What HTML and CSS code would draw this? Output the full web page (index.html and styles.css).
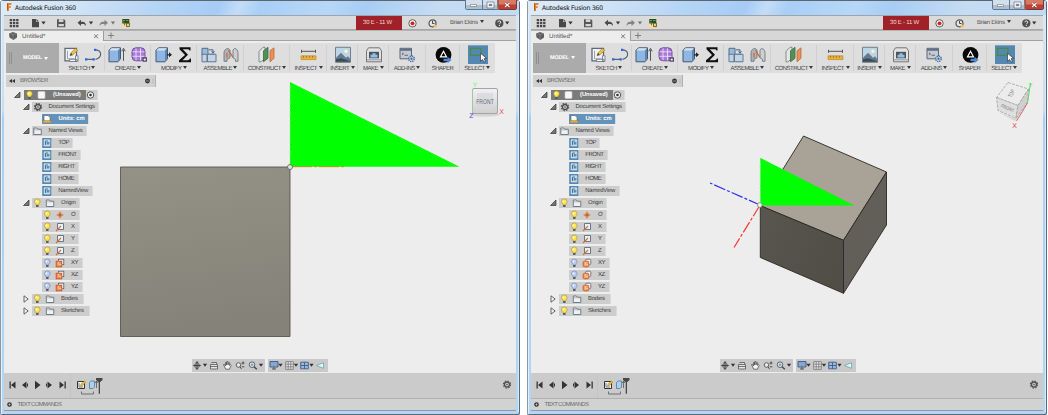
FILE: index.html
```html
<!DOCTYPE html>
<html lang="en">
<head>
<meta charset="utf-8">
<title>Autodesk Fusion 360</title>
<link rel="stylesheet" href="styles.css">
</head>
<body>
<main class="desktop" id="desktop"></main>
<script src="app.js"></script>
</body>
</html>
```

FILE: styles.css
```css
* { box-sizing: border-box; }
body { margin: 0; background: #fff; overflow: hidden; font-family: "Liberation Sans", Arial, sans-serif; text-rendering: geometricPrecision; }
svg { display: block; flex: none; }
.desktop { display: flex; gap: 7px; width: 1048px; height: 415px; }

.window { width: 520px; height: 415px; flex: none; display: flex; flex-direction: column; padding: 0 4px 4px; border-radius: 4px 4px 2px 2px; overflow: hidden; border: 0 solid #5e7386; box-shadow: inset 1px 0 #8697a6, inset -1px -1px #596977, inset 0 1px #5c6670, inset 2px 0 #e4f1fc, inset -2px 0 #d8ebfb; background: linear-gradient(180deg, #d9e7f5 0, #c9ddf1 110px, #a8cff5 118px, #b4d6f6 100%); }
.window .frame { display: flex; flex-direction: column; flex: 1; min-height: 0; border-left: 0; }
.titlebar { height: 14px; margin: 1px -3px 0; padding-left: 3px; flex: none; display: flex; background: linear-gradient(112deg, #dfebf7 0, #cfe2f6 16%, #b5d5f5 30%, #a6ccf5 42%, #c4ddf7 46%, #a9cff6 50%, #b7d7f7 63%, #a7cdf3 70%, #c5dcf3 84%, #c2dbf3 100%); }
.brand { display: flex; align-items: center; height: 12px; gap: 2px; font: 6.4px "Open Sans", "Liberation Sans", sans-serif; color: #222; letter-spacing: -.06px; flex: 1; -webkit-text-stroke: .1px #222; }
.controls { display: flex; margin-right: 2px; margin-top: -1px; }

.quickbar { height: 15px; flex: none; display: flex; background: #dadada; border-top: 1px solid #9aa5ae; border-bottom: 1px solid #a6a6a6; }
.spacer { flex: 1; }
.clock-slot { width: 46px; margin: 0 0 -1px; background: #a02128; color: #f3d9da; font-size: 6px; line-height: 14px; text-align: center; padding-right: 3px; letter-spacing: -.22px; }
.user { width: 48px; padding-left: 8px; font-size: 6px; line-height: 14px; color: #505050; letter-spacing: -.24px; white-space: nowrap; }
.caret { display: inline-block; border: 2px solid transparent; border-top: 3px solid #3a3a3a; border-bottom: 0; margin-left: 1.5px; vertical-align: 1px; }
.user .caret { margin-left: 2.5px; }

.tabs { height: 11px; flex: none; display: flex; background: #d7d7d7; border-bottom: 1px solid #a3a3a3; border-top: 1px solid #b4b4b4; }
.tab { width: 100px; display: flex; align-items: center; background: #ededed; border-right: 1px solid #9d9d9d; font-size: 6.2px; color: #555; height: 10px; }
.tab span { flex: 1; padding-top: 1px; }

.workspace { flex: 1; min-height: 0; position: relative; background: #ededed; padding: 2px 0 0 2px; }
.second .workspace { padding-top: 1.5px; }
.scene { position: absolute; left: 0; top: 0; z-index: 0; pointer-events: none; }
.toolbar { display: flex; width: 489px; height: 30px; background: #dedede; position: relative; }
.mode { width: 53px; display: flex; align-items: center; background: #ababab; color: #fff; font-size: 5.5px; font-weight: bold; letter-spacing: -.2px; }
.mode .grip { width: 3px; height: 12px; border-left: 1px solid #909090; border-right: 1px solid #909090; margin: 0 11px 0 3px; }
.mode .caret { border-top-color: #fff; margin-left: 1px; }
.group { display: flex; flex-direction: column; align-items: center; background: linear-gradient(#d0d0d0, #d0d0d0) right 2px / 1px 26px no-repeat; }
.group.last { background: none; }
.label { font-size: 6px; line-height: 8px; color: #3d3d3d; letter-spacing: -.5px; white-space: nowrap; margin-top: 1px; }

.browser-head { width: 150px; height: 12px; margin-top: 2px; background: #d0d0d0; display: flex; align-items: center; border-right: 1px solid #b1b1b1; font-size: 6px; letter-spacing: -.43px; color: #6b6b6b; }
.browser-head span { flex: 1; }
.tree { padding-top: 2px; position: relative; display: flex; flex-direction: column; width: 110px; }
.row { height: 12px; display: flex; align-items: center; }
.row.d1 { padding-left: 6px; }
.row.d2 { padding-left: 17px; }
.row.d3 { padding-left: 36px; }
.node { height: 10px; display: flex; align-items: center; background: #cdcdcd; border-right: 1px solid #dadada; font-size: 5.9px; color: #3c3c3c; white-space: nowrap; letter-spacing: -.2px; }
.node.root { background: linear-gradient(90deg, #7b7b7b 62px, #cdcdcd 62px); color: #fff; }
.node.root b { width: 33px; font-size: 5.8px; letter-spacing: -.05px; }
.node.units { background: #6592b9; color: #fff; font-weight: bold; letter-spacing: -.08px; }
.node.caps { font-size: 6px; letter-spacing: -.48px; }

.navbar { position: absolute; left: 188px; top: 318px; display: flex; gap: 3px; }
.second .navbar { left: 188.5px; top: 317.5px; }
.navbar div { background: #c9c9c9; height: 13px; }

.timeline { height: 26px; flex: none; background: #cbcbcb; display: flex; justify-content: space-between; border-bottom: 1px solid #b2b2b2; }
.textbar { height: 12px; flex: none; background: #d2d2d2; border-bottom: 1px solid #8e9ba7; display: flex; align-items: center; font-size: 5.9px; color: #6c6c6c; letter-spacing: -.6px; }
```

FILE: app.js
```js
const svg = (w, h, body) => `<svg width="${w}" height="${h}" viewBox="0 0 ${w} ${h}" fill="none">${body}</svg>`;
const at = (x, y, body) => `<g transform="translate(${x} ${y})">${body}</g>`;
const down = (x, y) => `<path d="M${x - 2.1} ${y - 1.2}h4.2l-2.1 3z" fill="#333"/>`;

/* Title bar and quick access */
const logo = svg(9, 12, '<path d="M3 2h4.7l-.6 2H5v1.300h2L6.500 7H5v3H3z" fill="#e88228"/><path d="M3 2l1 1v6l-1 1z" fill="#b5591b"/>');
const controls = svg(52, 10, `
  <rect x=".5" y="-2" width="17" height="11.5" rx="1.5" fill="#d3dfeb" stroke="#64788d"/>
  <rect x="17.5" y="-2" width="15.5" height="11.5" fill="#d3dfeb" stroke="#64788d"/>
  <path d="M1 5h16v4H1zM18 5h15v4H18z" fill="#aebfd0"/>
  <rect x="33" y="-2" width="18.5" height="11.5" rx="1.5" fill="#d87965" stroke="#6d3b3a"/><path d="M33.5 4.5h17.5V9H33.5z" fill="#bf4030"/>
  <path d="M5.500 4.500h6v2h-6z" fill="#fff" stroke="#667585" stroke-width=".6"/>
  <path d="M23 3h5v4h-5z" fill="#aaa" stroke="#fff" stroke-width="1.3"/><path d="M22 2h7v6h-7zM24.500 4.500h2v1h-2z" stroke="#56687a" stroke-width=".6"/>
  <path d="M40 3l4.500 4M44.500 3L40 7" stroke="#6d3632" stroke-width="2"/><path d="M40 3l4.500 4M44.500 3L40 7" stroke="#fff" stroke-width="1.100"/>`);
const quick = {
  grid: svg(20, 14, '<path d="M5.700 3h2.400v2.200H5.700zm3.200 0h2.400v2.200H8.900zm3.200 0h2.400v2.200h-2.400zM5.700 6h2.400v2.200H5.700zm3.200 0h2.400v2.200H8.900zm3.200 0h2.400v2.200h-2.400zM5.700 9h2.400v2.200H5.700zm3.200 0h2.400v2.200H8.900zm3.200 0h2.400v2.200h-2.400z" fill="#484848"/>'),
  file: svg(24, 14, `<path d="M8 3h4v3h3v5.300H8zM12.500 3L15 5.500h-2.500z" fill="#484848"/>${down(19.5, 6.8)}`),
  save: svg(26, 14, '<path d="M9 3.300h7l1.300 1.300v6.700H9z" fill="#565656"/><path d="M10.800 3.300h4.600v2.700h-4.600zM10.500 8h5.400v2.300h-5.400z" fill="#d5d5d5"/>'),
  undo: svg(22, 14, `<path d="M3.500 6.700L7 3.700v2h1.500c2 0 3.500 1.200 3.500 4.500-.8-1.600-1.800-2.200-3.500-2.200H7v2z" fill="#4a4a4a"/>${down(17, 6.8)}`),
  redo: svg(22, 14, `<g opacity=".6"><path d="M12 6.700L8.500 3.700v2H7c-2 0-3.500 1.200-3.500 4.500.8-1.600 1.800-2.200 3.500-2.200h1.500v2z" fill="#4a4a4a"/>${down(17, 6.8)}</g>`),
  palette: svg(16, 14, '<path d="M4 3h8v8.500H4z" fill="#f5dc92"/><path d="M4.300 3h7v4.500h-7z" fill="#234d2b"/><path d="M5 4h2v1H5zM8 4h2.500v1H8z" fill="#3fae55"/><path d="M5 5.800h1.500v1H5z" fill="#c84a3c"/><path d="M6.500 7.500v1.700M8.500 7.300h3v3.300h-3z" stroke="#5c4a26" stroke-width=".8" fill="#e8ce7a"/>'),
  record: svg(21, 14, '<circle cx="10.500" cy="7.300" r="3.700" stroke="#555" stroke-width=".9" fill="#eee"/><circle cx="10.500" cy="7.300" r="1.900" fill="#df1e1e"/>'),
  clock: svg(19, 14, '<circle cx="9.500" cy="7.300" r="3.500" stroke="#555" stroke-width="1.200" fill="#e6e6e6"/><path d="M9.500 5v2.500h2" stroke="#444"/><path d="M10.500 8.800h3.200v2.500h-3.200z" fill="#f3b75f"/>'),
  help: svg(26, 14, `<circle cx="9.300" cy="7.300" r="4.100" fill="#505050"/><path d="M7.900 6.200c0-1.800 2.900-1.700 2.900 0 0 1-1.400 1-1.400 2.100M9.400 9v1" stroke="#eee"/>${down(17.2, 6.8)}`)
};

/* Ribbon icons, each drawn round its own centre */
const ico = {
  sketch: '<path d="M-6.500-6.500h11.500v12.500h-11.500z" fill="#eef2f7" stroke="#5f6874" stroke-width="1.300"/><path d="M-4-4v8h7" stroke="#8a9099" stroke-width=".8"/><path d="M-1.500 1l1-3L4-6.500l2.300 2L1.200.3z" fill="#f0bd45" stroke="#8a6a2c" stroke-width=".5"/><path d="M-1.500 1l1-3 1.600 2z" fill="#444"/><path d="M-2 4.500h7.500v2.200H-2zM4 1h2.500v5.500H4z" fill="#f5f5f5" stroke="#576475" stroke-width=".7"/>',
  spline: '<path d="M-6.500 4.500H.500M1.500-5C10-5 9 3 2.500 4.500" stroke="#566579" stroke-width="1.200"/><path d="M-8 3.500h2.300v2.300H-8zM-.5 3.500h2.300v2.300H-.5zM1-6h2.300v2.300H1z" fill="#286bd0"/>',
  box: '<path d="M-7-4.500l2.500-2.500h9v11L2 7H-7z" fill="#8fb7e3" stroke="#45586e" stroke-width="1"/><path d="M-6.500-4.300h8.500l2-2.200h-8.300z" fill="#d3e3f4"/><path d="M2-4.200v10.600l2-2.700V-6.500z" fill="#5c86b6"/>',
  rise: '<path d="M7 6V-5M5.300-3.500L7-6.500l1.700 3" stroke="#444" stroke-width=".9"/>',
  form: '<rect x="-7" y="-7" width="13" height="13" rx="4" fill="#a87bd8" stroke="#77529e"/><path d="M-6.500-3H5.500M-6.500 1.500H5.500M-3-6.500v12M1.500-6.500v12" stroke="#f2e8fb" stroke-width=".8"/><path d="M3.500 2.500H8V7H3.500z" fill="#5c476a"/><path d="M4.500 4.800H7M5.800 3.500v2.500" stroke="#fff" stroke-width=".8"/>',
  press: '<path d="M4 0h4" stroke="#222" stroke-width="1.300"/><path d="M6-2.500L9 0 6 2.500z" fill="#222"/>',
  sigma: '<path d="M5.500-4.300V-7.500H-5.500V-5.500L0 .2l-6 5.300v2H6V3.800H4.900c-.3 1.300-1 1.700-2.200 1.700h-5.200L3 0l-5.200-5.600h4.500c1.200 0 1.900.3 2.200 1.300z" fill="#111"/>',
  assemble: '<path d="M-7-6.500h6v6h6.500V6.500h-10V.5H-7z" fill="#9bbada" stroke="#516c8a"/><path d="M-1.500-.5h8.500V7h-8.500zM-7-.5h5V7H-7z" fill="#c2d5e7" stroke="#627990"/><path d="M0-5h4v3M2.500-3.500L4-1.500l1.500-2" stroke="#45678b"/>',
  joint: '<path d="M-7 6.500v-8c0-5 5-6 6-3V3l-3 1.500v2z" fill="#b0b5ba" stroke="#666d75" stroke-width=".8"/><path d="M7 6.500v-8c0-5-4-6-5-3V3l2.500 1.500v2z" fill="#ccd0d3" stroke="#666d75" stroke-width=".8"/><path d="M-4 3v-5M-2.500-4.500L2 2.500" stroke="#c76943" stroke-width="1.300"/>',
  construct: '<path d="M-8-3.500l4-4h2v11l-4 3.500h-2z" fill="#e5e7e6" stroke="#6e7772" stroke-width=".8"/><path d="M-3.500-4L1-7.500v11L-3.500 7z" fill="#519157" stroke="#3d6a43" stroke-width=".8"/><path d="M3-4l4-3v10.500L3 7z" fill="#ed9056" stroke="#b45f34" stroke-width=".7"/>',
  inspect: '<path d="M-7-3.500H7M-7-5v3M7-5v3" stroke="#555"/><path d="M-7.500 1h15v3.800h-15z" fill="#e8b13b" stroke="#b58320" stroke-width=".6"/><path d="M-5 1v2M-2 1v2M1 1v2M4 1v2" stroke="#946716" stroke-width=".7"/>',
  insert: '<path d="M-7.500-7.500h15v15h-15z" fill="#bdd5ea" stroke="#747d85"/><path d="M-7 3l5-5L3 3l2-1.500L7 4v3H-7z" fill="#66798a"/><path d="M-7 4.500l5-1 9 3v.5H-7z" fill="#384b59"/><circle cx="3" cy="-3.500" r="1.700" fill="#fff4ba"/>',
  make: '<path d="M-7.500-4l2-3h11l2 3V7h-15z" fill="#e2e2e2" stroke="#6a6a6a" stroke-width=".9"/><path d="M-5-3H5v6.500H-5z" fill="#4a555e"/><path d="M-3.500 0h2v-1.500h3V0h2v2.700h-7z" fill="#8bc1ed"/><path d="M-7 5H7" stroke="#999"/>',
  addins: '<path d="M-7-6.500h11.500V4H-7z" fill="#c4cad3" stroke="#5d6673"/><path d="M-7-6h11v2H-7z" fill="#617087"/><path d="M-5-2l1.500 1L-5 0M-2.500.5H1" stroke="#444" stroke-width=".7"/><circle cx="4.500" cy="4" r="2.700" fill="#d7e6f6" stroke="#4a6f9d" stroke-width="1.500" stroke-dasharray="1.400 .700"/><circle cx="4.500" cy="4" r="1.200" fill="#4a6f9d"/>',
  shaper: '<circle r="7.900" fill="#080808"/><path d="M-3 2L0-3.500 3 2z" stroke="#fff" stroke-width="1.200"/><path d="M0 4h4V2l4 3.300L4 8.500v-2H0z" fill="#4a89dc"/>',
  select: '<path d="M-10-9.500h20V10h-20z" fill="#5587b3"/><path d="M-7.500-6.500h10.500v7h-10.500z" stroke="#4b8a3f" stroke-width="1.200"/><path d="M2.500-1.500v8l2-1.800L6 7.300l1.400-.7-1.300-2.700 2.600-.3z" fill="#fff" stroke="#222" stroke-width=".6"/>'
};
const groups = [
  ['SKETCH', 46, [[12.5, 'sketch'], [34, 'spline']]],
  ['CREATE', 46, [[11, 'box'], [11.5, 'rise'], [34, 'form']]],
  ['MODIFY', 46, [[12, 'box'], [12, 'press'], [34, 'sigma']]],
  ['ASSEMBLE', 47, [[12, 'assemble'], [34, 'joint']]],
  ['CONSTRUCT', 46, [[23, 'construct']]],
  ['INSPECT', 37, [[18.5, 'inspect']]],
  ['INSERT', 31, [[16, 'insert']]],
  ['MAKE', 30.5, [[16, 'make']]],
  ['ADD-INS', 37, [[18, 'addins']]],
  ['SHAPER', 34, [[17.5, 'shaper']]],
  ['SELECT', 35.5, [[18, 'select']]]
];
const groupHtml = ([name, w, icons], i) => `<div class="group${i === 10 ? ' last' : ''}" style="width:${w}px">
  ${svg(w, 21, icons.map(([x, k]) => at(x, 11.8, ico[k])).join(''))}
  <div class="label">${name}${name === 'SHAPER' ? '' : '<i class="caret"></i>'}</div></div>`;

/* Browser tree */
const gear = '<circle r="2.500" stroke="#505050" stroke-width="1.300"/><circle r="3.600" stroke="#505050" stroke-width="1.100" stroke-dasharray="1.500 1.327"/><circle r=".8" fill="#505050"/>';
const bulb = on => `<path d="M-2.800-1.300A2.800 2.800 0 0 1 2.800-1.300C2.800 .300 1.400.600 1.200 2h-2.400C-1.400.600-2.800 .300-2.800-1.300z" fill="${on ? '#ffe44e' : '#b7cdf7'}" stroke="${on ? '#a58e37' : '#7185ad'}" stroke-width=".6"/><path d="M-1.200 2h2.400v2h-2.400z" fill="#555b66"/><circle cx="-.8" cy="-1.700" r=".9" fill="#fffef0"/>`;
const folder = '<path d="M-3.700-3h3l1 1.200h3.500V3.500h-7.500z" fill="#eef1f3" stroke="#59636e" stroke-width=".8"/><path d="M-3.500-1.200h7" stroke="#8b949b" stroke-width=".6"/>';
const glyph = {
  point: '<path d="M0-4L1.300-1.300 4 0 1.300 1.300 0 4-1.300 1.300-4 0-1.300-1.300z" fill="#dd814f"/><circle r="1.900" stroke="#dd814f" stroke-width=".7"/><circle r=".8" fill="#8e3f1d"/>',
  axis: '<path d="M-2.500-3.500h6v6h-6z" fill="#edf0f3" stroke="#5e6b79" stroke-width=".9"/><path d="M-4 4L1-1" stroke="#d16d3b" stroke-width="1.100"/>',
  plane: r => `<rect x="-1.500" y="-3.800" width="5.300" height="5.500" rx="${r}" fill="#eee" stroke="#5d6168" stroke-width=".8"/><rect x="-3.800" y="-1.700" width="5.500" height="5.500" rx="${r}" fill="${r ? '#f3a469' : '#ee935c'}" stroke="#cc5923" stroke-width="1"/><path d="M-1.500-1.500v3h3" stroke="#fbd5b8" stroke-width=".6"/>`,
  view: '<path d="M-4.500-5h9V5h-9z" fill="#5386b2"/><path d="M-2.700-3.200h5.700v6.200h-5.700z" fill="#bcd5e7" stroke="#e3eff7" stroke-width=".6"/><path d="M-1.300-2v4M.5-1v2.500M2-1v2.500M-1-2h2" stroke="#36648d" stroke-width=".9"/>'
};
const openTri = svg(9, 10, '<path d="M.500 7.500L6 2v5.500z" fill="#777" stroke="#333" stroke-width=".7"/>');
const shutTri = svg(9, 10, '<path d="M1 1.800L5.200 5 1 8.200z" fill="#f4f4f4" stroke="#444" stroke-width=".8"/>');
const views = [['TOP', 31], ['FRONT', 39], ['RIGHT', 37], ['HOME', 37], ['NamedView', 51]];
const origin = [['O', 37.5, 'point', 1], ['X', 37.5, 'axis', 1], ['Y', 37, 'axis', 1], ['Z', 37, 'axis', 1], ['XY', 41, 'plane', 0], ['XZ', 41, 'plane', 0], ['YZ', 41, 'plane', 0]];
const row = (depth, tri, cls, w, art, text) => `<div class="row ${depth}">${tri}<div class="node ${cls}" style="width:${w}px">${art}${text}</div></div>`;
const bulbFolder = svg(29, 10, at(5.3, 5, bulb(1)) + at(18, 5, folder));
const tree = r => [
  row('d1', svg(12, 10, '<path d="M2.500 7.500L8 2v5.500z" fill="#777" stroke="#333" stroke-width=".7"/>'), 'root', 74,
    svg(29, 10, at(5.5, 5, bulb(1)) + '<rect x="14" y="1.500" width="7" height="7" rx="1" fill="#f7f7f7" stroke="#c7c7c7" stroke-width=".7"/>'),
    `<b>(Unsaved)</b>${svg(11, 10, '<circle cx="4.500" cy="5" r="3.200" stroke="#444" stroke-width=".9" fill="#f4f4f4"/><circle cx="4.500" cy="5" r="1.300" fill="#333"/>')}`),
  row('d2', openTri, '', 67, svg(16.5, 10, at(6, 5, gear)), 'Document Settings'),
  row('d3', '', 'units', 47, svg(16.5, 10, '<path d="M2 1.500h4l2 2V7H2z" fill="#fff" stroke="#4e5d6a" stroke-width=".6"/><path d="M1 6.700h8v2H1z" fill="#eab23c" stroke="#a67c24" stroke-width=".4"/>'), 'Units: cm'),
  row('d2', openTri, '', 55, svg(16.5, 10, at(5.5, 5, folder)), 'Named Views'),
  ...views.map(([t, w]) => row('d3', '', t === 'NamedView' ? '' : 'caps', w, svg(16.3, 10, at(4.8, 5, glyph.view)), t)),
  row('d2', openTri, '', 47.5, bulbFolder, 'Origin'),
  ...origin.map(([t, w, g, on]) => row('d3', '', 'caps', w, svg(29, 10, at(5.3, 5, bulb(on)) + at(18, 5, g === 'plane' ? glyph.plane(r) : glyph[g])), t)),
  row('d2', shutTri, '', 52, bulbFolder, 'Bodies'),
  row('d2', shutTri, '', 58, bulbFolder, 'Sketches')
].join('');

/* Models; coordinates are relative to the canvas corner */
const frontScene = `
  <defs><linearGradient id="face" x1="0" y1="0" x2=".15" y2="1"><stop stop-color="#949186"/><stop offset="1" stop-color="#858279"/></linearGradient>
  <linearGradient id="cubeFace" x1="0" y1="0" x2="0" y2="1"><stop stop-color="#f1f1f1"/><stop offset="1" stop-color="#cfcfcf"/></linearGradient></defs>
  <path d="M116.500 126h169.500v169.500h-169.500z" fill="url(#face)" stroke="#58564f" stroke-width=".9"/>
  <path d="M286 41v84.700h169.500z" fill="#0f0"/>
  <path d="M286.300 44v80" stroke="#5ee45e" stroke-dasharray="7 2 2 2"/>
  <path d="M288 125.700h53" stroke="#b99000" stroke-dasharray="20 2 3 2" stroke-width=".9"/>
  <circle cx="286" cy="126" r="2.500" fill="#dcead8" stroke="#4f5f60" stroke-width=".8"/>
  <ellipse cx="481" cy="73.500" rx="15" ry="2" fill="#c9c9c9" opacity=".7"/>
  <rect x="468.500" y="47.500" width="25" height="25" rx="1.500" fill="url(#cubeFace)" stroke="#a3a3a3"/>
  <rect x="473" y="52" width="16" height="16" fill="#d5d7dd" opacity=".7"/>
  <text x="481" y="63" font-size="6.800" textLength="17.500" lengthAdjust="spacingAndGlyphs" text-anchor="middle" fill="#666c75">FRONT</text>
  <text x="471" y="46" font-size="6.500" text-anchor="middle" fill="#6bed6b">Y</text><path d="M468.500 48v25" stroke="#a7d8a7" stroke-width=".6"/>
  <text x="497.500" y="73" font-size="7" text-anchor="middle" fill="#f04a4a">X</text>
  <text x="467.500" y="76.500" font-size="7" text-anchor="middle" fill="#4c4cdf">Z</text>`;
const homeScene = `
  <defs><linearGradient id="left" x1="0" y1="0" x2="1" y2=".5"><stop stop-color="#59564e"/><stop offset="1" stop-color="#504e46"/></linearGradient></defs>
  <g stroke="#292824" stroke-width=".9" stroke-linejoin="round">
  <path d="M272.500 95l83 36-43 68.300-83.200-34.600z" fill="#a8a297"/>
  <path d="M229.300 164.700l83.200 34.600v53L229.300 216.500z" fill="url(#left)"/>
  <path d="M355.500 131v53l-43 68.300v-53z" fill="#615f57"/></g>
  <path d="M229.300 117v47.500h94z" fill="#0f0"/><path d="M229.300 122v42" stroke="#82e682" stroke-width=".8" stroke-dasharray="8 2 2 2"/>
  <path d="M229 164l-50-22" stroke="#3030f5" stroke-width="1.200" stroke-dasharray="12 2 3 2"/>
  <path d="M228.500 165l-25.500 41.500" stroke="#f33" stroke-width="1.200" stroke-dasharray="12 2 3 2"/>
  <circle cx="228.800" cy="164" r="2.400" fill="#eef3ec" stroke="#818881" stroke-width=".8"/>
  <path d="M467 71l17 9 12-14-10 13z" fill="#d0d0d0"/>
  <g stroke="#999" stroke-width=".7" stroke-dasharray="3 1.200"><path d="M477 41.500l20.500 6.500-10.500 16.500-21.500-8z" fill="#ececec"/><path d="M465.500 56.500l21.500 8-2 13-18-8z" fill="#dedede"/><path d="M497.500 48l-1 13-11.500 16.500 2-13z" fill="#cfcfcf"/></g>
  <path d="M499.500 42l-3 20" stroke="#54dd6a"/><path d="M496.500 62l-11 18" stroke="#dc6666"/>
  <text transform="translate(480.500 57) rotate(-62)" font-size="6" fill="#777" textLength="8" lengthAdjust="spacingAndGlyphs">TOP</text>
  <text transform="translate(469.500 66) rotate(23)" font-size="4.800" fill="#777" textLength="14" lengthAdjust="spacingAndGlyphs">FRONT</text>
  <text x="499.500" y="45.500" font-size="6" text-anchor="middle" fill="#62e462">Y</text>
  <text x="483.500" y="87" font-size="7" text-anchor="middle" fill="#e54444">X</text>`;

/* View controls and timeline */
const nav = `<div>${svg(73, 13, `
  ${at(5, 6.5, '<path d="M-3.500 0h7M0-3.500v7M-1.500-2L0-4l1.500 2M-1.500 2L0 4l1.500-2" stroke="#444" stroke-width="1"/><ellipse rx="3.500" ry="1.500" stroke="#555" stroke-width=".7"/>')}${down(13, 6)}
  ${at(22, 6.5, '<path d="M-3.500-1h7v4.500h-7zM-2.500-3h5v2M-4 1h8" fill="#e5e5e5" stroke="#555" stroke-width=".8"/>')}
  ${at(35, 6.5, '<path d="M-3.500-1l1.200 0 .8 1.500V-3h1v2.500l.3-3.500h1l.2 3.500L1.700-3l1 .2L2.500 0l1-1 .7.7L2.500 3.700h-3.800z" fill="#f3f3f3" stroke="#444" stroke-width=".7"/>')}
  ${at(47.5, 6.5, '<circle cx="-1" cy="-.500" r="2.300" fill="#dfe9f3" stroke="#555" stroke-width=".9"/><path d="M.500 1.300L2 3.500M2-2.500h3M3.500-4v3M2.300 1.300h2.500" stroke="#444" stroke-width=".9"/>')}
  ${at(61, 6.5, '<circle cx="-1" cy="-.800" r="2.800" fill="#dfe9f3" stroke="#555" stroke-width=".9"/><path d="M1 1.200l2.800 2.600" stroke="#444" stroke-width="1.400"/><path d="M-2.200-1.800h2.500v2h-2.500z" fill="#7b9cbd"/>')}${down(69, 6)}`)}</div>
  <div>${svg(60, 13, `
  ${at(6, 6.5, '<path d="M-4-4h8v5.500h-8z" fill="#7fa8da" stroke="#45576d" stroke-width=".9"/><path d="M-2 3.500h4M0 1.500v2" stroke="#555"/>')}${down(12.5, 6)}
  ${at(21.5, 6.5, '<path d="M-3.800-3.800h7.600v7.600h-7.600zM-1.300-3.800v7.600M1.300-3.800v7.600M-3.800-1.300h7.600M-3.800 1.300h7.600" fill="#eee" stroke="#666" stroke-width=".7"/>')}${down(28, 6)}
  ${at(36.5, 6.5, '<path d="M-3.800-3.300h7.600v6.600h-7.600zM0-3.300v6.600M-3.800 0h7.600" fill="#96b9e4" stroke="#405d82" stroke-width=".9"/>')}${down(43.500, 6)}
  ${at(52, 6.5, '<path d="M-3.500 0L3.500-2.800V2.800z" fill="#e2f7f5" stroke="#68a8a8" stroke-width=".8"/>')}`)}</div>`;
const timeline = svg(110, 25, `<g fill="#333">
  <path d="M5.500 8.500h1.300v7H5.500zM11.500 8.500v7L7 12zM22.500 8.500v7L18 12zM31 7.800l5.500 4.200-5.500 4.200zM43.500 8.500v7l4.500-3.500zM55.500 8.500v7L60 12zM60.500 8.500h1.300v7h-1.300z"/><path d="M23 10.500h1v3h-1zM42 10.500h1v3h-1z"/></g>
  <path d="M66.500 1v24" stroke="#c4c4c4"/>
  <path d="M73.500 8.500h7v7h-7z" fill="#eef3f8" stroke="#333"/><path d="M75 10v4h4" stroke="#718294"/><path d="M76.500 13l.5-2 3.500-3 1.300 1.200-3.300 3.300z" fill="#efbc30" stroke="#947022" stroke-width=".4"/>
  <path d="M85.500 9.500l1.500-1.500h3.500v6l-1.500 1.500h-3.500z" fill="#acd0f1" stroke="#50779f" stroke-width=".8"/><path d="M92.500 15V8.500M91.200 10l1.300-2 1.300 2" stroke="#555" stroke-width=".8"/>
  <path d="M92 5h6.500v2l-2.500 2.300v11.500h-1.300V9.300L92 7z" fill="#484848"/>
  <path d="M77.500 18.500v2.500h12v-2.500" stroke="#666" stroke-width=".9"/>`);

const appWindow = (cls, scene, r) => `<section class="window ${cls}">
  <header class="titlebar"><div class="brand">${logo}Autodesk Fusion 360</div><div class="controls">${controls}</div></header>
  <div class="frame">
    <div class="quickbar">${quick.grid}${quick.file}${quick.save}${quick.undo}${quick.redo}${quick.palette}<div class="spacer"></div>
      <div class="clock-slot">30 E - 11 W</div>${quick.record}${quick.clock}<div class="user">Brian Ekins<i class="caret"></i></div>${quick.help}</div>
    <div class="tabs"><div class="tab">${svg(18, 10, '<path d="M5 2.500L9 1l4 1.500v4L9.500 9 5.500 6.500z" fill="#5d5d5d"/><path d="M5 2.500l4 1 4-1M9 3.500V9" stroke="#999" stroke-width=".6"/>')}<span>Untitled*</span>${svg(9, 9, '<path d="M0 2.300l4 4M4 2.300l-4 4" stroke="#666" stroke-width=".9"/>')}</div>${svg(14, 9, '<path d="M4 4.500h6M7 1.500v6" stroke="#777" stroke-width=".9"/>')}</div>
    <div class="workspace"><svg class="scene" width="520" height="332" viewBox="0 0 520 332" fill="none">${scene}</svg>
      <div class="toolbar"><div class="mode"><i class="grip"></i>MODEL&nbsp;<i class="caret"></i></div>${groups.map(groupHtml).join('')}</div>
      <div class="browser-head">${svg(14, 12, '<path d="M6 4v4L3 6zM9 4v4L6 6z" fill="#333"/>')}<span>BROWSER</span>${svg(12, 12, '<circle cx="4.500" cy="6" r="2.400" fill="#333"/><path d="M3.200 6h2.600" stroke="#ccc" stroke-width=".7"/><path d="M10 3.500v5" stroke="#bbb"/>')}</div>
      <div class="tree">${tree(r)}</div>
      <div class="navbar">${nav}</div>
    </div>
    <div class="timeline">${timeline}${svg(20, 25, at(11, 11.5, gear))}</div>
    <div class="textbar">${svg(13.5, 11, '<circle cx="5.500" cy="5.500" r="2.300" fill="#333"/><path d="M4.300 5.500h2.400M5.500 4.300v2.400" stroke="#ddd" stroke-width=".6"/>')}TEXT COMMANDS</div>
  </div></section>`;

document.getElementById('desktop').innerHTML = appWindow('first', frontScene, 0) + appWindow('second', homeScene, 1.3);
```
